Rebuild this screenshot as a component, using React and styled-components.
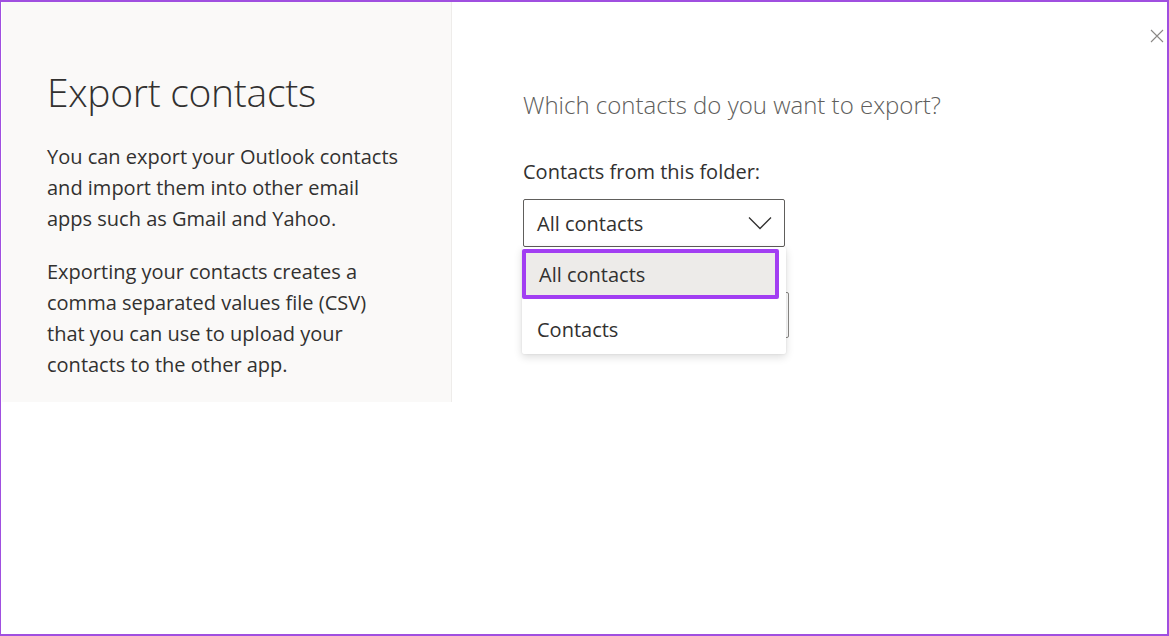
import React from "react";
import styled, { createGlobalStyle } from "styled-components";

const Global = createGlobalStyle`
  html, body { margin: 0; padding: 0; background: #ffffff; }
  body { font-family: "Open Sans", "Noto Sans", sans-serif; color: #323130; }
  * { box-sizing: border-box; }
`;

const Frame = styled.div`
  position: relative;
  width: 1169px;
  height: 636px;
  border: 2px solid #a04fe0;
  border-left-width: 1px;
  display: flex;
  align-items: flex-start;
  background: #ffffff;
  overflow: hidden;
`;

const Side = styled.aside`
  width: 450px;
  height: 400px;
  margin-left: 1px;
  background: #faf9f8;
  border-right: 1px solid #eeecea;
  padding: 63px 20px 0 45px;
`;

const Title = styled.h1`
  margin: 0 0 22px;
  font-size: 39px;
  font-weight: 300;
  line-height: 54px;
  color: #323130;
  letter-spacing: -0.3px;
`;

const Para = styled.p`
  max-width: 356px;
  margin: 0 0 22px;
  font-size: 20px;
  line-height: 31px;
  color: #323130;
`;

const Main = styled.main`
  flex: 1;
  padding: 86px 0 0 71px;
  display: flex;
  flex-direction: column;
`;

const Question = styled.h2`
  margin: 0 0 36px;
  font-size: 24px;
  font-weight: 300;
  line-height: 34px;
  color: #605e5c;
`;

const Label = styled.label`
  font-size: 20px;
  line-height: 28px;
  color: #323130;
  margin-bottom: 13px;
`;

const Field = styled.div`
  position: relative;
  width: 262px;
`;

const SelectBox = styled.div`
  height: 48px;
  border: 1px solid #605e5c;
  border-radius: 2px;
  display: flex;
  align-items: center;
  justify-content: space-between;
  padding: 0 12px 0 13px;
  font-size: 20px;
  color: #323130;
  background: #fff;
`;

const Second = styled.div`
  margin-top: 45px;
  width: 266px;
  height: 46px;
  border: 1px solid #8a8886;
  border-radius: 2px;
`;

const Menu = styled.ul`
  position: absolute;
  top: 48px;
  left: -1px;
  width: 264px;
  margin: 0;
  padding: 2px 0 1px;
  list-style: none;
  background: #fff;
  box-shadow: 0 3px 8px rgba(0, 0, 0, 0.14), 0 0 2px rgba(0, 0, 0, 0.1);
  border-radius: 2px;
  z-index: 2;
`;

const Item = styled.li`
  height: ${(p) => (p.$active ? "50px" : "54px")};
  margin-right: ${(p) => (p.$active ? "7px" : "0")};
  padding: ${(p) => (p.$active ? "0 0 0 13px" : "6px 0 0 15px")};
  display: flex;
  align-items: center;
  font-size: 20px;
  color: #323130;
  background: ${(p) => (p.$active ? "#edebe9" : "transparent")};
  border: ${(p) => (p.$active ? "4px solid #a23ef2" : "none")};
  border-radius: ${(p) => (p.$active ? "2px" : "0")};
`;

const Close = styled.button`
  position: absolute;
  top: 24px;
  right: 0;
  width: 20px;
  height: 20px;
  padding: 0;
  border: none;
  background: transparent;
  display: flex;
  align-items: center;
  justify-content: center;
`;

export default function App() {
  return (
    <>
      <Global />
      <Frame>
        <Side>
          <Title>Export contacts</Title>
          <Para>
            You can export your Outlook contacts and import them into other email apps such as Gmail and Yahoo.
          </Para>
          <Para>
            Exporting your contacts creates a comma separated values file (CSV) that you can use to upload your
            contacts to the other app.
          </Para>
        </Side>
        <Main>
          <Question>Which contacts do you want to export?</Question>
          <Label>Contacts from this folder:</Label>
          <Field>
            <SelectBox>
              <span>All contacts</span>
              <svg width="24" height="14" viewBox="0 0 24 14" fill="none">
                <path d="M1 1.5 L12 12.5 L23 1.5" stroke="#323130" strokeWidth="1.3" />
              </svg>
            </SelectBox>
            <Menu>
              <Item $active>All contacts</Item>
              <Item>Contacts</Item>
            </Menu>
            <Second />
          </Field>
        </Main>
        <Close aria-label="Close">
          <svg width="14" height="14" viewBox="0 0 14 14">
            <path d="M1 1 L13 13 M13 1 L1 13" stroke="#8a8886" strokeWidth="1.1" />
          </svg>
        </Close>
      </Frame>
    </>
  );
}
